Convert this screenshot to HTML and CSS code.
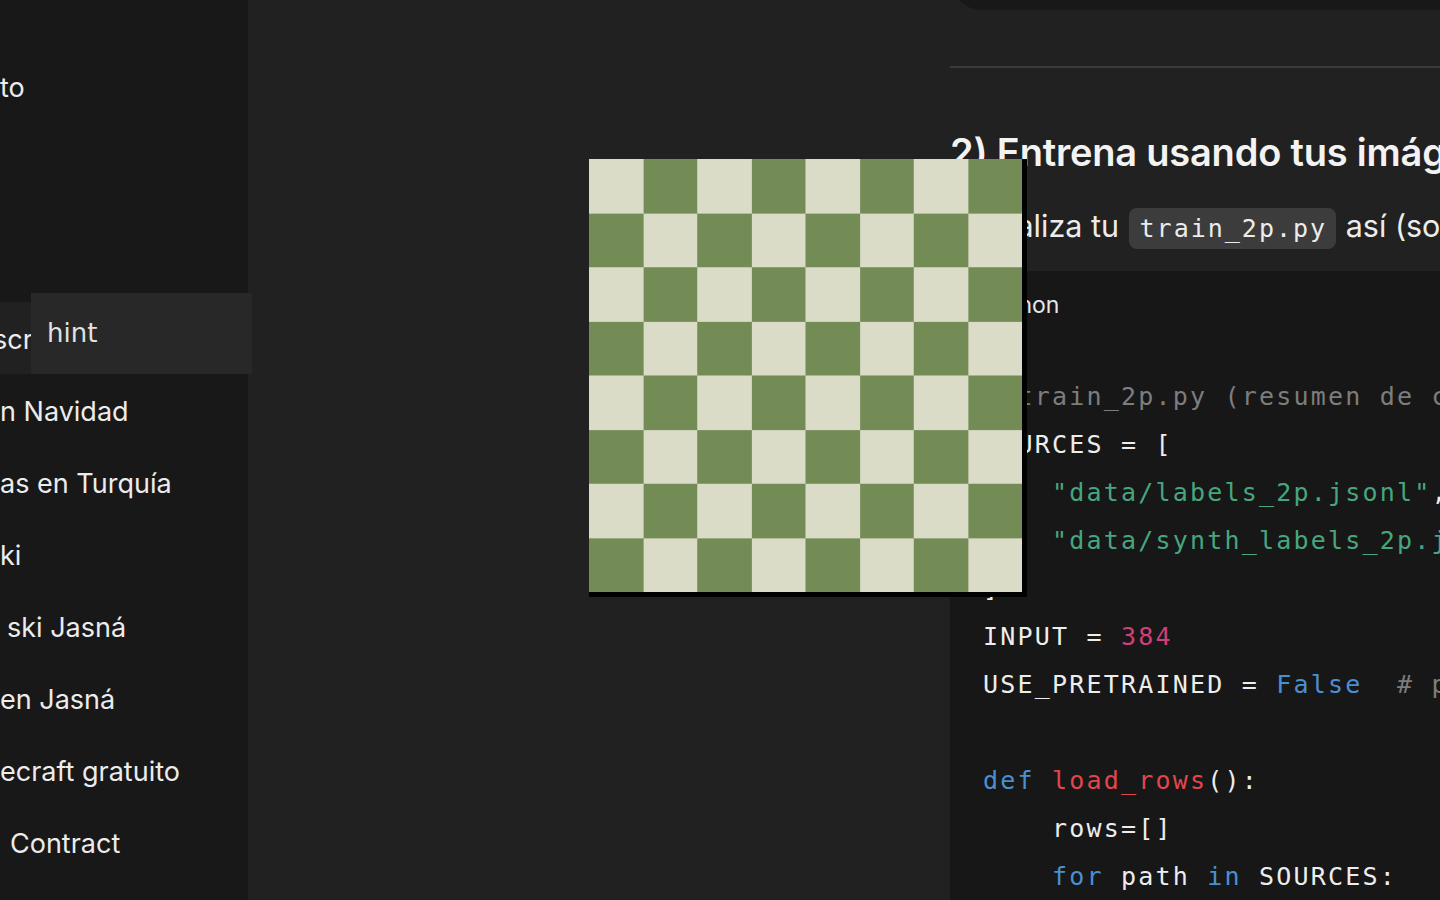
FILE: index.html
```html
<!DOCTYPE html>
<html lang="es">
<head>
<meta charset="utf-8">
<title>Chat</title>
<link rel="stylesheet" href="styles.css">
</head>
<body>
<div class="app">
  <aside class="sidebar">
    <div class="item">to</div>
    <div class="spacer"></div>
    <div class="item active indent-scr">scr</div>
    <div class="item">n Navidad</div>
    <div class="item">as en Turquía</div>
    <div class="item">ki</div>
    <div class="item indent-s">ski Jasná</div>
    <div class="item">en Jasná</div>
    <div class="item">ecraft gratuito</div>
    <div class="item indent-c">Contract</div>
  </aside>
  <main class="main">
    <div class="content">
      <div class="topbox"></div>
      <hr class="rule">
      <h2 class="heading">2) Entrena usando tus imágenes</h2>
      <p class="para">Actualiza tu <code class="inline">train_2p.py</code> así (solo lo esencial):</p>
      <div class="codeblock">
        <div class="code-head">python</div>
<pre class="code"><span class="c"># train_2p.py (resumen de cambios)</span>
SOURCES = [
    <span class="s">"data/labels_2p.jsonl"</span>,
    <span class="s">"data/synth_labels_2p.jsonl"</span>,
]
INPUT = <span class="n">384</span>
USE_PRETRAINED = <span class="k">False</span>  <span class="c"># pon True si quieres</span>

<span class="k">def</span> <span class="f">load_rows</span>():
    rows=[]
    <span class="k">for</span> path <span class="k">in</span> SOURCES:</pre>
      </div>
    </div>
  </main>
</div>
<div class="hint">hint</div>
<div class="board">
  <svg width="433" height="433" viewBox="0 0 8 8" shape-rendering="crispEdges" preserveAspectRatio="none">
    <defs>
      <pattern id="chk" width="2" height="2" patternUnits="userSpaceOnUse">
        <rect width="2" height="2" fill="#dbdcc8"/>
        <rect x="1" y="0" width="1" height="1" fill="#738b55"/>
        <rect x="0" y="1" width="1" height="1" fill="#738b55"/>
      </pattern>
    </defs>
    <rect width="8" height="8" fill="url(#chk)"/>
  </svg>
</div>
</body>
</html>
```

FILE: styles.css
```css
* { box-sizing: border-box; }
html, body {
  margin: 0;
  padding: 0;
  width: 1440px;
  height: 900px;
  overflow: hidden;
  background: #212121;
  font-family: Inter, "Noto Sans", sans-serif;
  color: #ececec;
}
.app {
  display: flex;
  height: 900px;
}
.sidebar {
  width: 248px;
  flex: 0 0 248px;
  background: #181818;
  display: flex;
  flex-direction: column;
  padding-top: 50px;
  overflow: hidden;
}
.item {
  height: 72px;
  line-height: 75px;
  font-size: 27px;
  color: #ececec;
  white-space: nowrap;
}
.spacer { height: 180px; }
.active { background: #212121; }
.indent-scr { text-indent: -7px; }
.indent-s { padding-left: 7px; }
.indent-c { padding-left: 10px; }

.main {
  flex: 1;
  padding-left: 702px;
  overflow: hidden;
}
.content {
  width: 900px;
}
.topbox {
  height: 50px;
  margin-top: -40px;
  background: #181818;
  border-bottom-left-radius: 32px;
}
.rule {
  margin: 56px 0 0;
  border: 0;
  height: 2px;
  background: #3b3b3b;
}
.heading {
  margin: 62px 0 0;
  font-size: 38px;
  line-height: 44px;
  font-weight: 600;
  color: #f3f3f3;
  white-space: nowrap;
  letter-spacing: -0.2px;
}
.para {
  margin: 30px 0 0;
  font-size: 30.5px;
  line-height: 44px;
  white-space: nowrap;
  color: #ececec;
}
.inline {
  font-family: "DejaVu Sans Mono", monospace;
  font-size: 25px;
  letter-spacing: 2px;
  background: #3c3c3c;
  border-radius: 8px;
  padding: 6px 9px 6px 11px;
  margin: 0 1px;
}
.codeblock {
  margin-top: 20px;
  background: #171717;
  height: 700px;
}
.code-head {
  height: 72px;
  line-height: 68px;
  padding-left: 34px;
  font-size: 23px;
  color: #e6e6e6;
}
.code {
  margin: 0;
  padding: 30px 0 0 33px;
  font-family: "DejaVu Sans Mono", monospace;
  font-size: 25px;
  letter-spacing: 2.2px;
  line-height: 48px;
  color: #ededed;
}
.c { color: #7d7d7d; }
.s { color: #47a67e; }
.n { color: #cf3f78; }
.k { color: #4a8fd2; }
.f { color: #e0464b; }

.hint {
  position: absolute;
  left: 31px;
  top: 293px;
  width: 221px;
  height: 81px;
  background: #282828;
  color: #e2e2e2;
  font-family: "DejaVu Sans", sans-serif;
  font-size: 26px;
  line-height: 81px;
  padding-left: 16px;
}
.board {
  position: absolute;
  left: 589px;
  top: 159px;
  width: 438px;
  height: 438px;
  border-right: 5px solid #000;
  border-bottom: 5px solid #000;
}
.board svg { display: block; }
```
